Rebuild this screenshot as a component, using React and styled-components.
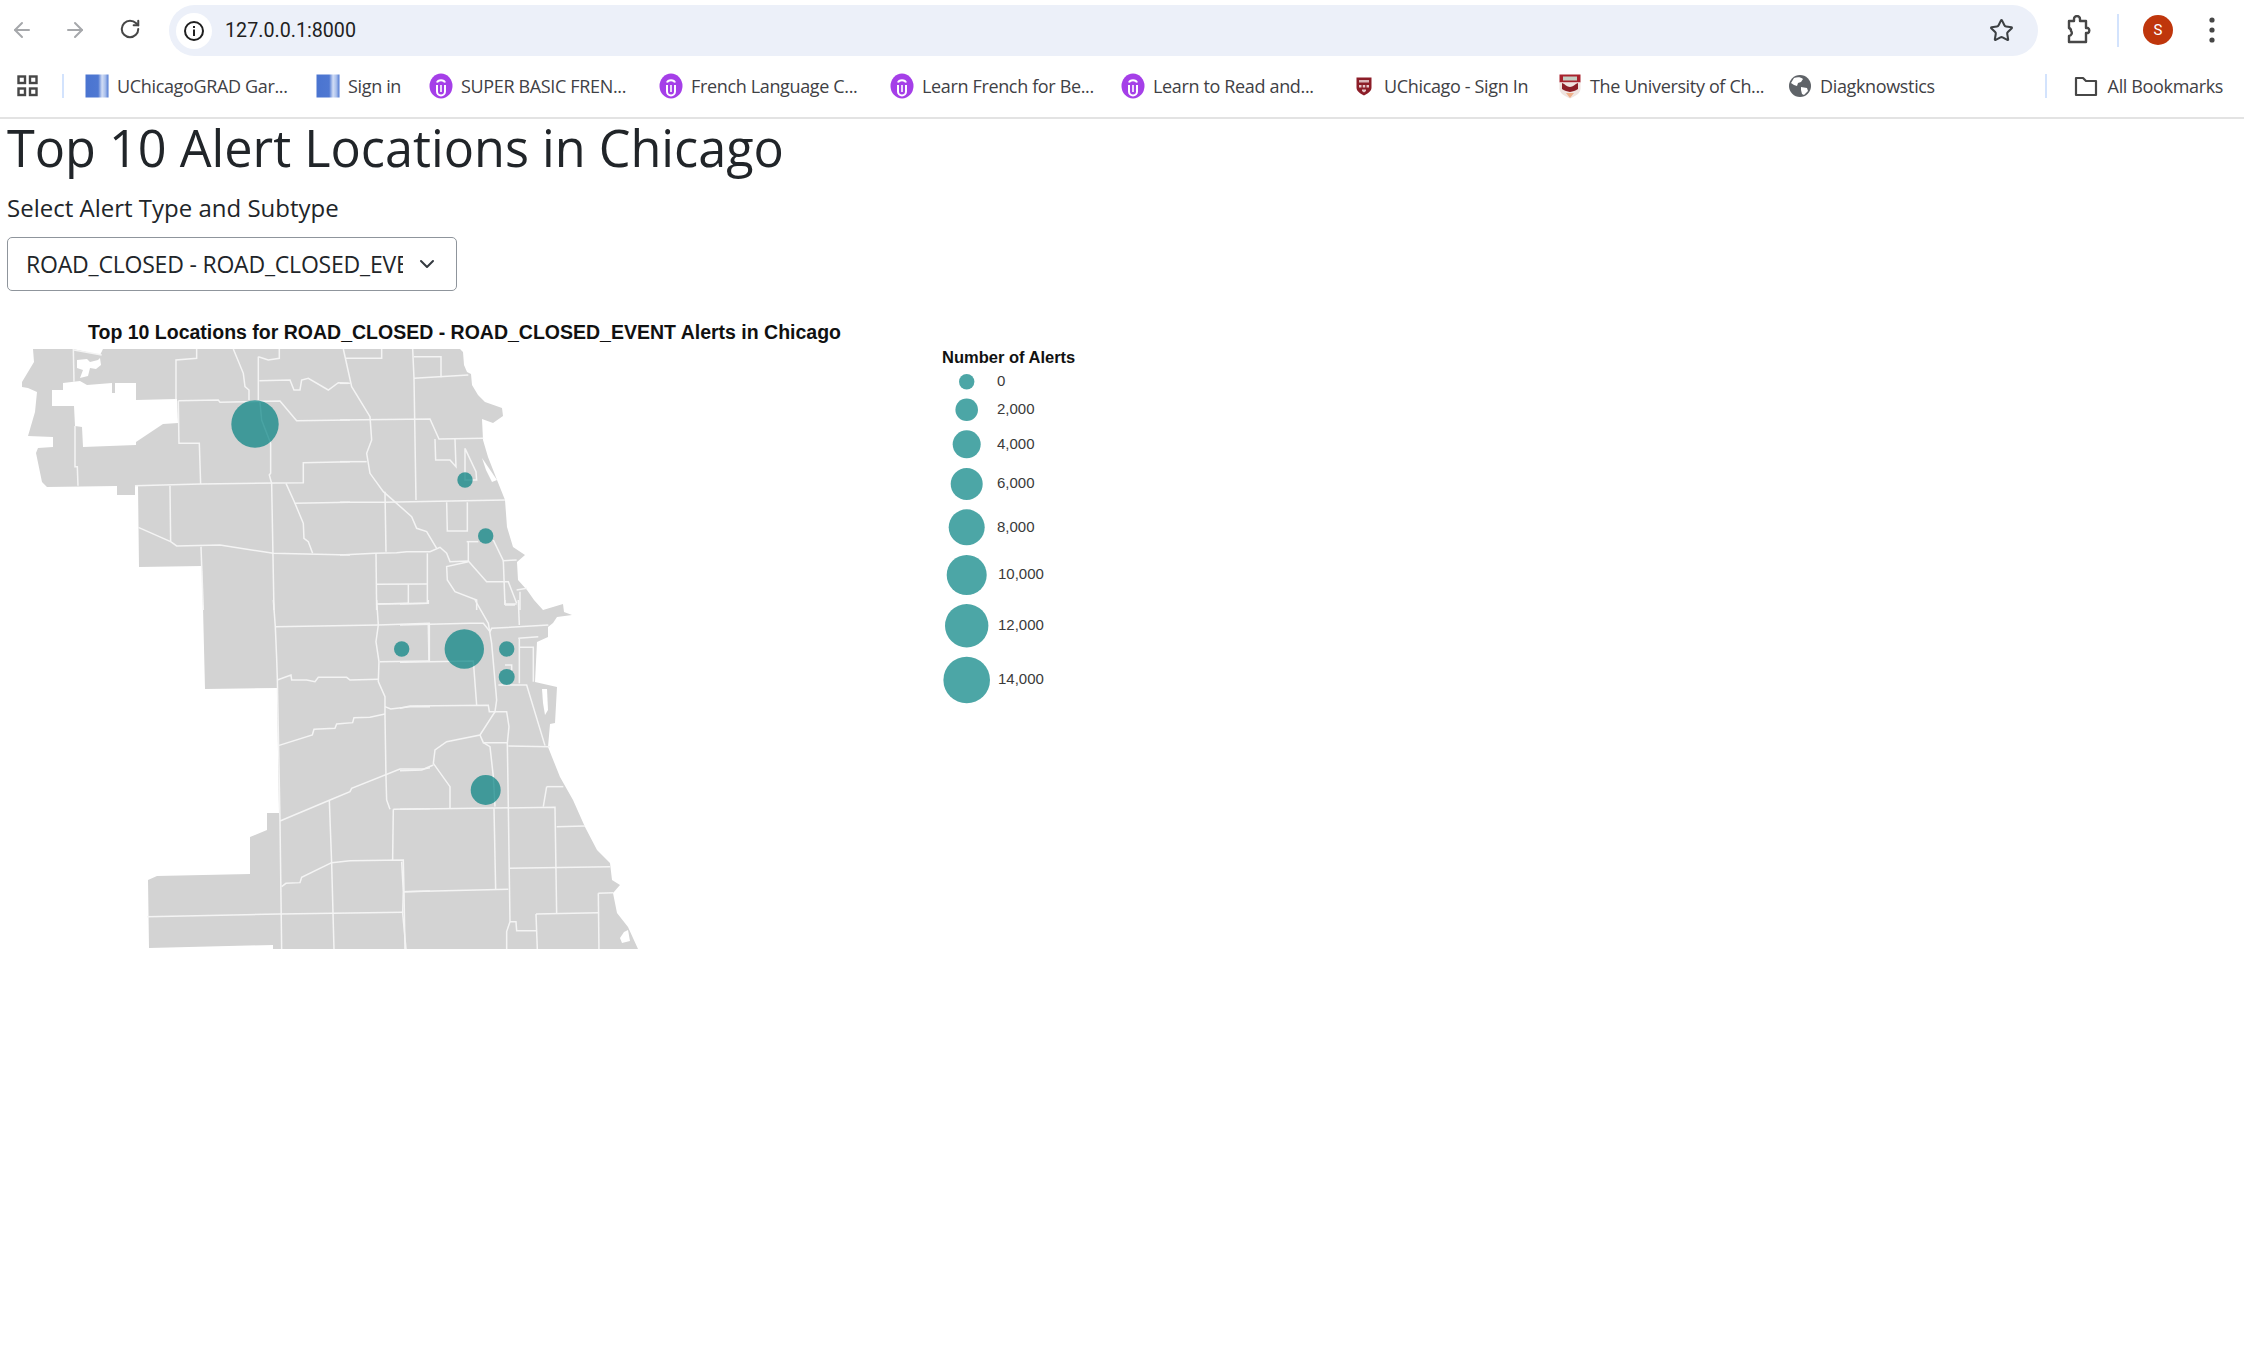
import React from 'react';
import styled, { createGlobalStyle } from 'styled-components';
import { ArrowLeft, ArrowRight, RotateCw, Star, ChevronDown } from 'lucide-react';

const GlobalStyle = createGlobalStyle`
  html, body {
    margin: 0;
    height: 100%;
    background: #ffffff;
    overflow: hidden;
  }
  body {
    font-family: "Open Sans", "Liberation Sans", sans-serif;
    color: #212529;
  }
`;

const Toolbar = styled.div`
  height: 60px;
  display: flex;
  align-items: center;
  padding-right: 14px;
  box-sizing: border-box;
`;

const NavButton = styled.div`
  width: ${p => p.$width}px;
  display: flex;
  justify-content: center;
  color: ${p => (p.$muted ? '#a6a8ab' : '#474747')};
`;

const NavGroup = styled.div`
  display: flex;
  width: 169px;
  margin-top: -1px;
`;

const Omnibox = styled.div`
  width: 1869px;
  height: 51px;
  margin-top: 1px;
  background: #ecf0f9;
  border-radius: 26px;
  display: flex;
  align-items: center;
  padding: 0 24px 0 7px;
  box-sizing: border-box;
`;

const InfoBadge = styled.div`
  width: 36px;
  height: 36px;
  border-radius: 50%;
  background: #ffffff;
  display: flex;
  align-items: center;
  justify-content: center;
  flex-shrink: 0;
`;

const Url = styled.div`
  margin-left: 13px;
  flex: 1;
  font-family: Roboto, sans-serif;
  font-size: 19.7px;
  color: #1f1f1f;
`;

const ToolbarEnd = styled.div`
  flex: 1;
  display: flex;
  align-items: center;
  padding-left: 28px;
`;

const Divider = styled.div`
  width: 2px;
  height: ${p => p.$h || 28}px;
  margin-left: ${p => p.$left || 0}px;
  margin-right: ${p => p.$right || 0}px;
  background: #d3e3fd;
  flex-shrink: 0;
`;

const Avatar = styled.div`
  width: 30px;
  height: 30px;
  border-radius: 50%;
  background: #bf360c;
  color: #fff;
  font-family: Roboto, sans-serif;
  font-size: 15px;
  display: flex;
  align-items: center;
  justify-content: center;
  margin-left: 24px;
`;

const Kebab = styled.div`
  display: flex;
  margin-left: 36px;
`;

const BookmarksBar = styled.div`
  height: 52px;
  padding: 0 0 5px 17px;
  display: flex;
  align-items: center;
  border-bottom: 2px solid #e3e3e3;
`;

const AppsIcon = styled.div`
  width: 45px;
  display: flex;
`;

const Bookmark = styled.div`
  width: ${p => p.$width}px;
  display: flex;
  align-items: center;
  gap: 8px;
  flex-shrink: 0;
  white-space: nowrap;
  font-size: 18px;
  letter-spacing: -0.35px;
  color: #3f4145;
`;

const BookmarkIcon = styled.span`
  width: 24px;
  height: 26px;
  display: flex;
  align-items: center;
  justify-content: center;
  flex-shrink: 0;
`;

const Bookmarks = styled.div`
  display: flex;
  align-items: center;
  margin-left: 21px;
`;

const AllBookmarks = styled.div`
  margin-left: auto;
  display: flex;
  align-items: center;
  gap: 10px;
  padding-right: 21px;
  font-size: 18px;
  letter-spacing: -0.35px;
  color: #3f4145;
  white-space: nowrap;
`;

const Page = styled.main`
  padding: 0 7px;
`;

const Heading = styled.h1`
  margin: 0;
  padding-top: 0;
  font-weight: 400;
  font-size: 50.4px;
  line-height: 58px;
  color: #212529;
`;

const FieldLabel = styled.label`
  display: block;
  margin-top: 15px;
  font-size: 24px;
  line-height: 32px;
  color: #212529;
`;

const SelectBox = styled.div`
  width: 450px;
  height: 54px;
  margin-top: 13px;
  box-sizing: border-box;
  border: 1px solid #8f959c;
  border-radius: 5px;
  display: flex;
  align-items: center;
  padding: 0 17px 0 18px;
  gap: 12px;
`;

const SelectValue = styled.div`
  flex: 1;
  overflow: hidden;
  white-space: nowrap;
  font-size: 23px;
  letter-spacing: -0.2px;
  color: #212529;
`;

const ChartFrame = styled.svg`
  display: block;
  margin: 27px 0 0 -7px;
  overflow: visible;
`;

const ChartTitle = styled.text`
  font-family: "Liberation Sans", Arial, sans-serif;
  font-weight: 700;
  font-size: ${p => p.$size}px;
  fill: #111111;
`;

const LegendLabel = styled.text`
  font-family: "Liberation Sans", Arial, sans-serif;
  font-size: 15px;
  fill: #3a3a3a;
  dominant-baseline: central;
`;

const DocIcon = () => (
  <svg width="24" height="24" viewBox="0 0 24 24">
    <defs>
      <linearGradient id="docShade" x1="0" x2="1" y1="0" y2="0">
        <stop offset="0" stopColor="#4a74d0" />
        <stop offset="0.55" stopColor="#4f78d2" />
        <stop offset="0.72" stopColor="#d2ddf5" />
        <stop offset="0.86" stopColor="#a9bfec" />
        <stop offset="1" stopColor="#4f78d2" />
      </linearGradient>
    </defs>
    <rect x="0.5" y="0.5" width="23" height="23" fill="url(#docShade)" />
  </svg>
);

const ClipIcon = () => (
  <svg width="24" height="26" viewBox="0 0 24 26">
    <ellipse cx="12" cy="13" rx="11.5" ry="12.5" fill="#a53fe8" />
    <path d="M8 12v6.5a4 4 0 0 0 8 0V12" fill="none" stroke="#fff" strokeWidth="2" />
    <path d="M12 12v7" fill="none" stroke="#fff" strokeWidth="1.6" />
    <path d="M8 9.500c1-3 7-3 8 0" fill="none" stroke="#fff" strokeWidth="2" />
  </svg>
);

const ShieldIcon = () => (
  <svg width="16" height="19" viewBox="0 0 16 19">
    <path d="M0.500 0.500h15v10c0 4-4 6-7.500 8-3.500-2-7.500-4-7.500-8z" fill="#8c1d28" />
    <rect x="3" y="3" width="10" height="2.500" fill="#d9b4b8" />
    <path d="M3 8h2.500v2.500H3zM6.750 8h2.500v2.500h-2.500zM10.500 8H13v2.500h-2.500zM6 12.500h4v1.500l-2 1.500-2-1.500z" fill="#e6c8cb" />
  </svg>
);

const CrestIcon = () => (
  <svg width="22" height="25" viewBox="0 0 22 25">
    <path d="M0.500 0.500h21v8H0.500z" fill="#a8232e" />
    <rect x="4" y="2.500" width="14" height="4" fill="#c4cdc2" />
    <path d="M0.500 8.500h21v6c0 5-5 7.500-10.500 10C5.500 22 0.500 19.500 0.500 14.500z" fill="#efe4e0" />
    <path d="M3 9c3 1 5 4 8 4s5-3 8-4v6c-3 2-5 2-8 3-3-1-5-1-8-3z" fill="#8c1f28" />
    <path d="M7 19h8l-4 5z" fill="#f0b08a" />
  </svg>
);

const GlobeIcon = () => (
  <svg width="24" height="24" viewBox="0 0 24 24">
    <circle cx="12" cy="12" r="11" fill="#5f6368" />
    <path d="M6 4c3-1 7-1 9 1l-2 3-3 1-1 3-3-1-3-2zM13 13l6 1 1 3-4 4-2-1-1-4z" fill="#fff" />
  </svg>
);

const bookmarks = [
  { label: 'UChicagoGRAD Gar...', width: 231, icon: <DocIcon /> },
  { label: 'Sign in', width: 113, icon: <DocIcon /> },
  { label: 'SUPER BASIC FREN...', width: 230, icon: <ClipIcon /> },
  { label: 'French Language C...', width: 231, icon: <ClipIcon /> },
  { label: 'Learn French for Be...', width: 231, icon: <ClipIcon /> },
  { label: 'Learn to Read and...', width: 231, icon: <ClipIcon /> },
  { label: 'UChicago - Sign In', width: 206, icon: <ShieldIcon /> },
  { label: 'The University of Ch...', width: 230, icon: <CrestIcon /> },
  { label: 'Diagknowstics', width: 200, icon: <GlobeIcon /> },
];

// outlines traced off the rendered map, each in its own crop coordinates
const landOutline = `M33 349 L73 349 L100 355 L103 349 L460 349 L463 352 L464 365 L467 372 L471 374 L472 385
  L478 395 L485 402 L502 408 L503 416 L493 423 L482 419 L483 440 L488 457 L497 480 L505 500 L507 527 L513 547
  L525 555 L517 562 L518 580 L527 590 L534 600 L543 610 L563 604 L564 612 L572 615 L557 617 L553 623 L548 627
  L548 637 L537 642 L535 682 L557 687 L555 723 L550 724 L548 747 L560 777 L573 800 L585 827 L597 850 L610 863
  L612 880 L620 885 L613 893 L617 913 L628 927 L638 949 L273 949 L273 945 L149 948 L148 880 L157 876 L250 874
  L250 837 L267 830 L267 813 L279 813 L277 688 L205 689 L202 566 L139 567 L138 486 L135 486 L135 495 L117 495
  L117 486 L47 487 L42 482 L36 453 L38 448 L53 447 L53 437 L28 436 L35 412 L37 392 L28 388 L22 387 L22 382
  L34 362 Z`;

const westHole = `M63 383 L80 381 L87 385 L112 383 L112 393 L115 393 L115 383 L136 383 L136 400 L177 399 L178 423
  L163 424 L136 442 L136 445 L83 447 L82 427 L75 426 L74 406 L52 406 L52 390 L63 390 Z`;

const smallHole = `M77 360 L87 359 L90 362 L98 360 L100 358 L101 365 L96 369 L90 368 L88 376 L80 378 L83 370 L77 368 Z`;

const lakeCuts = [
  'M542 689 L547 689 L548 710 L545 715 L543 703 Z',
  'M482 458 L497 480 L492 482 L486 470 Z',
  'M624 932 L628 930 L630 941 L622 943 L620 938 Z',
];

const crop5 = [
  '222,30 305,45',
  '220,27 222,125', '225,258 225,380 232,380 234,437',
  '590,27 590,55 528,60 528,178',
  '700,27 730,100 735,140 747,150 747,180',
  '775,50 775,180', '775,50 805,60 838,55 838,27',
  '778,122 870,120 882,150 900,150 905,120 925,115 985,150 1015,128 1050,130',
  '535,182 655,180 660,187 840,183 890,242 1050,240',
  '535,182 537,310 598,310 602,432',
  '780,185 785,240 812,310 812,400 808,405 815,430 822,810',
  '405,437 602,432 910,428 910,368 1050,365',
  '858,430 885,490 1050,487',
  '885,490 910,550 912,595 925,605 938,640',
  '510,437 512,605 530,618 660,615 820,640 1050,645',
  '415,562 512,605',
  '603,620 610,810',
];

const crop6 = [
  '10,27 35,140 90,230 95,300 80,340 90,400 130,455 170,490 215,530 230,565 260,575 290,625',
  '15,55 125,55 125,27',
  '218,27 222,115 228,480',
  '222,50 303,50 303,112',
  '222,115 385,105',
  '0,240 270,237 297,297 430,295',
  '285,297 287,360 330,360 348,380 345,297',
  '375,325 375,420 410,420 408,395 375,325',
  '0,130 25,130', '0,365 80,365',
  '0,487 135,487 495,480',
  '135,455 138,635',
  '320,487 322,573 382,573 382,487',
  '385,605 385,665', '380,605 415,605',
  '0,645 105,640 170,638 200,635 270,635 300,622 320,640 330,665 385,663 440,725 505,725 530,790',
  '385,665 320,680 322,720 345,755 410,780 410,810',
  '460,600 490,662 530,660',
  '490,662 495,795',
  '108,640 110,810', '110,733 262,732', '205,733 205,792', '262,640 262,790', '110,792 262,790',
  '495,795 525,795', '530,750 560,745', '540,755 540,810',
];

const crop7 = [
  '430,0 436,80 440,175 442,235 450,660 455,1047',
  '436,80 745,75 900,70',
  '740,0 745,75 738,125 747,185 745,245 765,290 765,345 768,530 770,600 780,628',
  '745,12 835,10', '750,185 895,183', '895,75 897,183',
  '442,240 483,225 485,240 530,240 555,245 565,232 650,232 660,240 745,238',
  '445,437 547,405 552,388 615,385 620,372 668,368 672,353 720,352 765,342',
  '765,320 782,327 840,320 900,320',
  '450,663 600,600 660,575 665,565 810,507 880,507 900,503',
  '598,600 605,790 612,1047',
  '605,788 660,782 820,780 822,870 825,1047',
  '790,628 900,626', '790,628 788,780',
  '455,860 468,850 510,848 515,832 605,788',
  '52,950 450,942 820,937',
  '822,875 900,873',
];

const crop8 = [
  '0,12 85,10 85,0',
  '0,75 210,70 250,70 270,95 275,85 445,75',
  '225,0 265,70 270,100 275,130 290,300 285,335 240,405 140,425 105,450 100,490 150,560 150,625',
  '355,0 358,75',
  '88,75 88,185',
  '0,187 220,183 230,315',
  '0,325 30,318 265,316 268,335 320,335 327,380 322,430 325,620 330,965 320,995 320,1047',
  '315,0 315,12 350,12',
  '240,405 250,428 322,428',
  '250,428 270,440 280,530 285,620',
  '100,495 65,510 0,512',
  '295,255 380,255 435,437',
  '355,115 415,110', '358,115 358,250', '358,142 400,142 400,245',
  '325,438 450,440',
  '440,560 490,560', '440,560 430,620',
  '0,628 465,622 470,940',
  '470,680 555,678',
  '328,805 630,800',
  '282,625 287,868',
  '10,875 325,868',
  '5,785 10,875 8,940 18,1047',
  '595,880 640,878', '595,880 597,1047',
  '408,942 595,938', '408,942 412,1047',
  '330,965 348,965 350,992 408,992',
  '315,195 335,195 335,210',
];

const boundaryCrops = [
  { x: 0, y: 340, lines: crop5 },
  { x: 340, y: 340, lines: crop6 },
  { x: 130, y: 600, lines: crop7 },
  { x: 400, y: 600, lines: crop8 },
];

const hotspots = [
  { x: 255, y: 424, r: 23.7 },
  { x: 465, y: 480, r: 7.7 },
  { x: 485.7, y: 536, r: 7.7 },
  { x: 401.7, y: 649, r: 7.7 },
  { x: 464.3, y: 649, r: 19.7 },
  { x: 506.7, y: 649, r: 7.7 },
  { x: 506.7, y: 677, r: 8 },
  { x: 485.7, y: 790, r: 15 },
];

const legend = [
  { label: '0', y: 381.7, r: 7.7, textX: 997 },
  { label: '2,000', y: 409.7, r: 11.3, textX: 997 },
  { label: '4,000', y: 444.3, r: 14, textX: 997 },
  { label: '6,000', y: 484, r: 16, textX: 997 },
  { label: '8,000', y: 527.3, r: 18, textX: 997 },
  { label: '10,000', y: 575, r: 20, textX: 998 },
  { label: '12,000', y: 625.7, r: 21.7, textX: 998 },
  { label: '14,000', y: 680, r: 23.3, textX: 998 },
];

const ChicagoChart = () => (
  <ChartFrame width="1100" height="640" viewBox="0 318 1100 640">
    <defs>
      <filter id="soft" x="-5%" y="-5%" width="110%" height="110%">
        <feGaussianBlur stdDeviation="0.35" />
      </filter>
    </defs>
    <ChartTitle x="88" y="338.500" $size={19.5}>
      Top 10 Locations for ROAD_CLOSED - ROAD_CLOSED_EVENT Alerts in Chicago
    </ChartTitle>
    <g filter="url(#soft)">
      <path d={landOutline} fill="#d3d3d3" />
      <path d={westHole} fill="#ffffff" />
      <path d={smallHole} fill="#ffffff" />
      {lakeCuts.map(cut => (
        <path key={cut} d={cut} fill="#ffffff" />
      ))}
      {boundaryCrops.map(crop => (
        <g key={`${crop.x}-${crop.y}`} transform={`translate(${crop.x} ${crop.y}) scale(0.3333)`}>
          {crop.lines.map(points => (
            <polyline key={points} points={points} fill="none" stroke="#f4f4f4" strokeWidth="4.5" />
          ))}
        </g>
      ))}
      {hotspots.map(spot => (
        <circle key={`${spot.x}-${spot.y}`} cx={spot.x} cy={spot.y} r={spot.r} fill="#008080" fillOpacity="0.7" />
      ))}
    </g>
    <ChartTitle x="942" y="362.500" $size={16.5}>Number of Alerts</ChartTitle>
    {legend.map(item => (
      <g key={item.label}>
        <circle cx="966.7" cy={item.y} r={item.r} fill="#008080" fillOpacity="0.7" />
        <LegendLabel x={item.textX} y={item.y - 1.2}>{item.label}</LegendLabel>
      </g>
    ))}
  </ChartFrame>
);

const App = () => (
  <>
    <GlobalStyle />
    <Toolbar>
      <NavGroup>
        <NavButton $muted $width={44}><ArrowLeft size={24} strokeWidth={2} /></NavButton>
        <NavButton $muted $width={62}><ArrowRight size={24} strokeWidth={2} /></NavButton>
        <NavButton $width={48}><RotateCw size={22} strokeWidth={2.2} /></NavButton>
      </NavGroup>
      <Omnibox>
        <InfoBadge>
          <svg width="22" height="22" viewBox="0 0 22 22">
            <circle cx="11" cy="11" r="9" fill="none" stroke="#1f1f1f" strokeWidth="2" />
            <rect x="10" y="9.5" width="2" height="6.5" fill="#1f1f1f" />
            <rect x="10" y="6" width="2" height="2" fill="#1f1f1f" />
          </svg>
        </InfoBadge>
        <Url>127.0.0.1:8000</Url>
        <Star size={25} strokeWidth={2} color="#3c4043" />
      </Omnibox>
      <ToolbarEnd>
        <svg width="26" height="30" viewBox="0 0 26 30">
          <path
            d="M3 6h5V4a3 3 0 0 1 6 0v2h6v7h2a3 3 0 0 1 0 5h-2v9H3v-6a3 3 0 0 0 2-5 3 3 0 0 0-2-3z"
            fill="none"
            stroke="#474747"
            strokeWidth="2.4"
            strokeLinejoin="round"
          />
        </svg>
        <Divider $left={25} $h={33} />
        <Avatar>S</Avatar>
        <Kebab>
          <svg width="6" height="28" viewBox="0 0 6 28">
            <circle cx="3" cy="4" r="2.6" fill="#474747" />
            <circle cx="3" cy="14" r="2.6" fill="#474747" />
            <circle cx="3" cy="24" r="2.6" fill="#474747" />
          </svg>
        </Kebab>
      </ToolbarEnd>
    </Toolbar>
    <BookmarksBar>
      <AppsIcon>
        <svg width="21" height="22" viewBox="0 0 21 22">
          <g fill="none" stroke="#474747" strokeWidth="2.4">
            <rect x="1.5" y="1.5" width="6.5" height="6.5" />
            <rect x="13" y="1.5" width="6.5" height="6.5" />
            <rect x="1.5" y="13.5" width="6.5" height="6.5" />
            <rect x="13" y="13.5" width="6.5" height="6.5" />
          </g>
        </svg>
      </AppsIcon>
      <Divider $h={24} />
      <Bookmarks>
        {bookmarks.map(item => (
          <Bookmark key={item.label} $width={item.width}>
            <BookmarkIcon>{item.icon}</BookmarkIcon>
            {item.label}
          </Bookmark>
        ))}
      </Bookmarks>
      <AllBookmarks>
        <Divider $h={24} $right={17} />
        <svg width="24" height="22" viewBox="0 0 24 22">
          <path d="M2 3h7l3 3h10v14H2z" fill="none" stroke="#474747" strokeWidth="2.2" strokeLinejoin="round" />
        </svg>
        All Bookmarks
      </AllBookmarks>
    </BookmarksBar>
    <Page>
      <Heading>Top 10 Alert Locations in Chicago</Heading>
      <FieldLabel>Select Alert Type and Subtype</FieldLabel>
      <SelectBox>
        <SelectValue>ROAD_CLOSED - ROAD_CLOSED_EVENT</SelectValue>
        <ChevronDown size={24} strokeWidth={2} color="#343a40" />
      </SelectBox>
      <ChicagoChart />
    </Page>
  </>
);

export default App;
